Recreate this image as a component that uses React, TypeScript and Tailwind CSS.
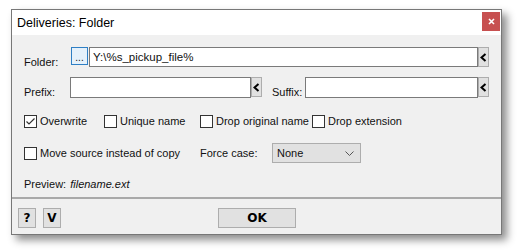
import type { ReactNode } from "react";

const font = { fontFamily: '"Liberation Sans", Arial, sans-serif' };

function Arrow() {
  return (
    <button className="flex h-[20px] w-[11px] shrink-0 items-center justify-center border border-[#adadad] bg-[#e1e1e1]">
      <svg width="7" height="9" viewBox="0 0 7 9">
        <polyline points="5.5,1 1.5,4.5 5.5,8" fill="none" stroke="#000" strokeWidth="2" />
      </svg>
    </button>
  );
}

function Check({ checked, children, w }: { checked?: boolean; children: ReactNode; w: string }) {
  return (
    <label className={`flex items-center gap-[3px] ${w}`}>
      <span className="flex h-[13px] w-[13px] shrink-0 items-center justify-center border border-[#333] bg-white">
        {checked && (
          <svg width="11" height="11" viewBox="0 0 11 11">
            <polyline points="1.5,5.5 4,8 9.5,2.5" fill="none" stroke="#333" strokeWidth="1.2" />
          </svg>
        )}
      </span>
      <span className="whitespace-nowrap">{children}</span>
    </label>
  );
}

export default function App() {
  return (
    <div className="h-[252px] w-[519px] overflow-hidden bg-white pl-[11px] pt-[9px] text-[11px] text-[#111]" style={font}>
      <div className="flex h-[226px] w-[491px] flex-col border border-[#777] bg-[#f0f0f0] shadow-[5px_5px_8px_rgba(0,0,0,0.45)]">
        {/* title bar */}
        <div className="flex h-[25px] shrink-0 items-start justify-between bg-white">
          <span className="pl-[5px] pt-[6px] text-[12.5px] leading-[15px] text-black">Deliveries: Folder</span>
          <button className="mr-[1px] mt-[2px] flex h-[19px] w-[18px] items-center justify-center bg-[#c75050]">
            <svg width="7" height="7" viewBox="0 0 7 7">
              <path d="M1 1L6 6M6 1L1 6" stroke="#fff" strokeWidth="1.6" />
            </svg>
          </button>
        </div>

        <div className="flex flex-1 flex-col px-[12px]">
          {/* folder */}
          <div className="mt-[12px] flex h-[20px] items-start">
            <span className="w-[47px] pt-[9px] leading-[13px]">Folder:</span>
            <button className="flex h-[18px] w-[17px] shrink-0 items-end justify-center border border-[#2f7fc4] bg-[#e5f1fb] pb-[1px] text-[10px] leading-[10px]">
              ...
            </button>
            <input
              className="ml-[1px] h-[20px] min-w-0 flex-1 border border-[#7a7a7a] bg-white px-[3px] text-[11.5px] outline-none"
              defaultValue="Y:\%s_pickup_file%"
              style={font}
            />
            <Arrow />
          </div>

          {/* prefix / suffix */}
          <div className="mt-[10px] flex h-[21px] items-start">
            <span className="w-[46px] pt-[9px] leading-[13px]">Prefix:</span>
            <input className="h-[21px] w-[181px] border border-[#7a7a7a] bg-white outline-none" />
            <Arrow />
            <span className="ml-[10px] w-[33px] pt-[9px] leading-[13px]">Suffix:</span>
            <input className="h-[21px] min-w-0 flex-1 border border-[#7a7a7a] bg-white outline-none" />
            <Arrow />
          </div>

          {/* options */}
          <div className="mt-[17px] flex h-[13px] items-center">
            <Check checked w="w-[80px]">Overwrite</Check>
            <Check w="w-[96px]">Unique name</Check>
            <Check w="w-[112px]">Drop original name</Check>
            <Check w="w-[100px]">Drop extension</Check>
          </div>

          <div className="mt-[15px] flex h-[20px] items-center">
            <Check w="w-[176px]">Move source instead of copy</Check>
            <span className="w-[72px]">Force case:</span>
            <div className="flex h-[20px] w-[89px] items-center justify-between border border-[#adadad] bg-[#e1e1e1] pl-[4px] pr-[6px]">
              <span>None</span>
              <svg width="9" height="5" viewBox="0 0 9 5">
                <polyline points="0.5,0.5 4.5,4.5 8.5,0.5" fill="none" stroke="#555" strokeWidth="1" />
              </svg>
            </div>
          </div>

          <div className="mt-[14px] flex h-[14px] items-center">
            <span>Preview:</span>
            <span className="ml-[4px] italic">filename.ext</span>
          </div>
        </div>

        {/* separator */}
        <div className="mb-[9px] h-[2px] bg-[#a9a9a9]" />

        {/* buttons */}
        <div className="mb-[6px] flex h-[20px] items-center px-[6px] text-[12px] font-bold text-black" style={{ fontFamily: '"DejaVu Sans", sans-serif' }}>
          <button className="flex h-[20px] w-[18px] items-center justify-center border border-[#adadad] bg-[#e1e1e1]">?</button>
          <button className="ml-[7px] flex h-[20px] w-[18px] items-center justify-center border border-[#adadad] bg-[#e1e1e1]">V</button>
          <button className="ml-[157px] flex h-[20px] w-[78px] items-center justify-center border border-[#adadad] bg-[#e1e1e1]">OK</button>
        </div>
      </div>
    </div>
  );
}
